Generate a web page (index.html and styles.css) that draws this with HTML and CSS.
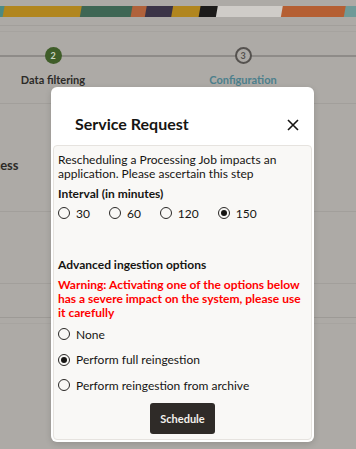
FILE: index.html
```html
<!DOCTYPE html>
<html lang="en">
<head>
  <meta charset="UTF-8" />
  <title>Service Request</title>
  <link rel="stylesheet" href="styles.css">
</head>
<body>
  <div class="page">
    <div class="banner"></div>
    <div class="rule rule-top"></div>
    <div class="rule rule-second"></div>

    <!-- wizard steps -->
    <div class="train">
      <div class="train-line"></div>
      <div class="steps">
        <div class="step">
          <span class="dot done">2</span>
          <span class="step-label">Data filtering</span>
        </div>
        <div class="step">
          <span class="dot todo">3</span>
          <span class="step-label link">Configuration</span>
        </div>
      </div>
    </div>

    <div class="rule"></div>
    <div class="row row-first"><span class="row-title">cess</span></div>
    <div class="rule"></div>
    <div class="row row-second"></div>
    <div class="rule"></div>
    <div class="row row-third"></div>
    <div class="rule rule-dark"></div>
    <div class="rule rule-light"></div>
  </div>

  <div class="dialog">
    <div class="dialog-head">
      <h2>Service Request</h2>
      <button class="close" title="Close">
        <svg width="12" height="12" viewBox="0 0 12 12"><path d="M1 1 L11 11 M11 1 L1 11" stroke="#161513" stroke-width="1.6" fill="none"/></svg>
      </button>
    </div>
    <div class="dialog-body">
      <p class="intro">Rescheduling a Processing Job impacts an application. Please ascertain this step</p>
      <div class="label">Interval (in minutes)</div>
      <div class="intervals">
        <label class="radio"><span class="ring"></span>30</label>
        <label class="radio"><span class="ring"></span>60</label>
        <label class="radio"><span class="ring"></span>120</label>
        <label class="radio"><span class="ring on"></span>150</label>
      </div>

      <div class="label adv">Advanced ingestion options</div>
      <p class="warning">Warning: Activating one of the options below has a severe impact on the system, please use it carefully</p>
      <div class="options">
        <label class="radio"><span class="ring"></span>None</label>
        <label class="radio"><span class="ring on"></span>Perform full reingestion</label>
        <label class="radio"><span class="ring"></span>Perform reingestion from archive</label>
      </div>

      <div class="actions">
        <button class="schedule">Schedule</button>
      </div>
    </div>
  </div>
</body>
</html>
```

FILE: styles.css
```css
body {
  margin: 0;
  background: #adaaa6;
  font-family: Lato, "Noto Sans", Arial, sans-serif;
  color: #161513;
  width: 356px;
  height: 449px;
  overflow: hidden;
}

.page {
  padding-top: 6px;
}

.banner {
  height: 11px;
  background: linear-gradient(100deg,
    #4c8a85 0, #4c8a85 4px,
    #b1861f 5px, #b1861f 80px,
    #3e6654 81px, #3e6654 130px,
    #b0623b 131px, #b0623b 144px,
    #3b3447 145px, #3b3447 170px,
    #b1861f 171px, #b1861f 197px,
    #1c1b1a 198px, #1c1b1a 214px,
    #cfccc8 215px, #cfccc8 278px,
    #b55f33 279px, #b55f33 340px,
    #6f9a98 341px);
}

.rule {
  height: 1px;
  background: #a29f9b;
}

.rule-top {
  margin-top: 8px;
}

.rule-second {
  margin-top: 5px;
  background: #a6a39f;
}

/* train */
.train {
  position: relative;
  height: 71px;
}

.train-line {
  position: absolute;
  left: 0;
  right: 0;
  top: 23px;
  height: 2px;
  background: #8e8b88;
}

.steps {
  display: flex;
  margin-left: -42px;
  padding-top: 15px;
}

.step {
  width: 190px;
  display: flex;
  flex-direction: column;
  align-items: center;
  position: relative;
}

.dot {
  width: 17px;
  height: 17px;
  border-radius: 50%;
  font-size: 9px;
  font-weight: bold;
  display: flex;
  align-items: center;
  justify-content: center;
  box-sizing: border-box;
}

.dot.done {
  background: #3f5d29;
  color: #c9d3c0;
}

.dot.todo {
  border: 2px solid #55524f;
  background: #adaaa6;
  color: #55524f;
}

.step-label {
  margin-top: 9px;
  font-size: 11px;
  font-weight: bold;
  color: #2c2a28;
}

.step-label.link {
  color: #4c7f8c;
}

.row-first {
  padding-top: 50px;
  height: 57px;
}

.row-title {
  font-size: 13px;
  font-weight: bold;
  color: #2c2a28;
  margin-left: -6px;
}

.row-second {
  height: 71px;
}

.row-third {
  height: 33px;
}

.rule-dark {
  background: #9d9a96;
}

.rule-light {
  margin-top: 5px;
  background: #a7a4a0;
}

/* dialog */
.dialog {
  position: absolute;
  left: 51px;
  top: 87px;
  width: 263px;
  height: 355px;
  background: #ffffff;
  border-radius: 6px;
  box-shadow: 0 2px 6px rgba(0, 0, 0, 0.15);
  display: flex;
  flex-direction: column;
  box-sizing: border-box;
  padding: 0 2px 2px 2px;
}

.dialog-head {
  height: 58px;
  display: flex;
  align-items: center;
  justify-content: space-between;
  padding: 14px 11px 0 22px;
  box-sizing: border-box;
}

.dialog-head h2 {
  margin: 0;
  font-size: 16px;
  font-weight: bold;
}

.close {
  border: none;
  background: none;
  padding: 0;
  width: 16px;
  height: 16px;
  display: flex;
  align-items: center;
  justify-content: center;
  margin-top: 4px;
  cursor: pointer;
}

.dialog-body {
  flex: 1;
  background: #f9f8f6;
  border: 1px solid #e6e3df;
  border-radius: 4px;
  padding: 7px 4px 0 4px;
  font-size: 12px;
  line-height: 13.5px;
}

.intro {
  margin: 0;
}

.label {
  font-weight: bold;
  margin-top: 7px;
}

.intervals {
  display: flex;
  gap: 19px;
  margin-top: 6px;
}

.radio {
  display: flex;
  align-items: center;
  gap: 6px;
}

.ring {
  width: 12px;
  height: 12px;
  border: 1.3px solid #2a2826;
  border-radius: 50%;
  box-sizing: border-box;
  display: flex;
  align-items: center;
  justify-content: center;
}

.ring.on::after {
  content: "";
  width: 6px;
  height: 6px;
  border-radius: 50%;
  background: #161513;
}

.adv {
  margin-top: 38px;
}

.warning {
  margin: 6px 0 0 0;
  color: #ff0000;
  font-weight: bold;
  line-height: 14px;
}

.options {
  display: flex;
  flex-direction: column;
  gap: 12px;
  margin-top: 8px;
}

.actions {
  display: flex;
  justify-content: center;
  margin-top: 11px;
}

.schedule {
  width: 65px;
  height: 31px;
  background: #2f2b28;
  color: #f4f2ee;
  border: none;
  border-radius: 3px;
  font-family: Lato, Arial, sans-serif;
  font-size: 11px;
  font-weight: bold;
  cursor: pointer;
}
```
